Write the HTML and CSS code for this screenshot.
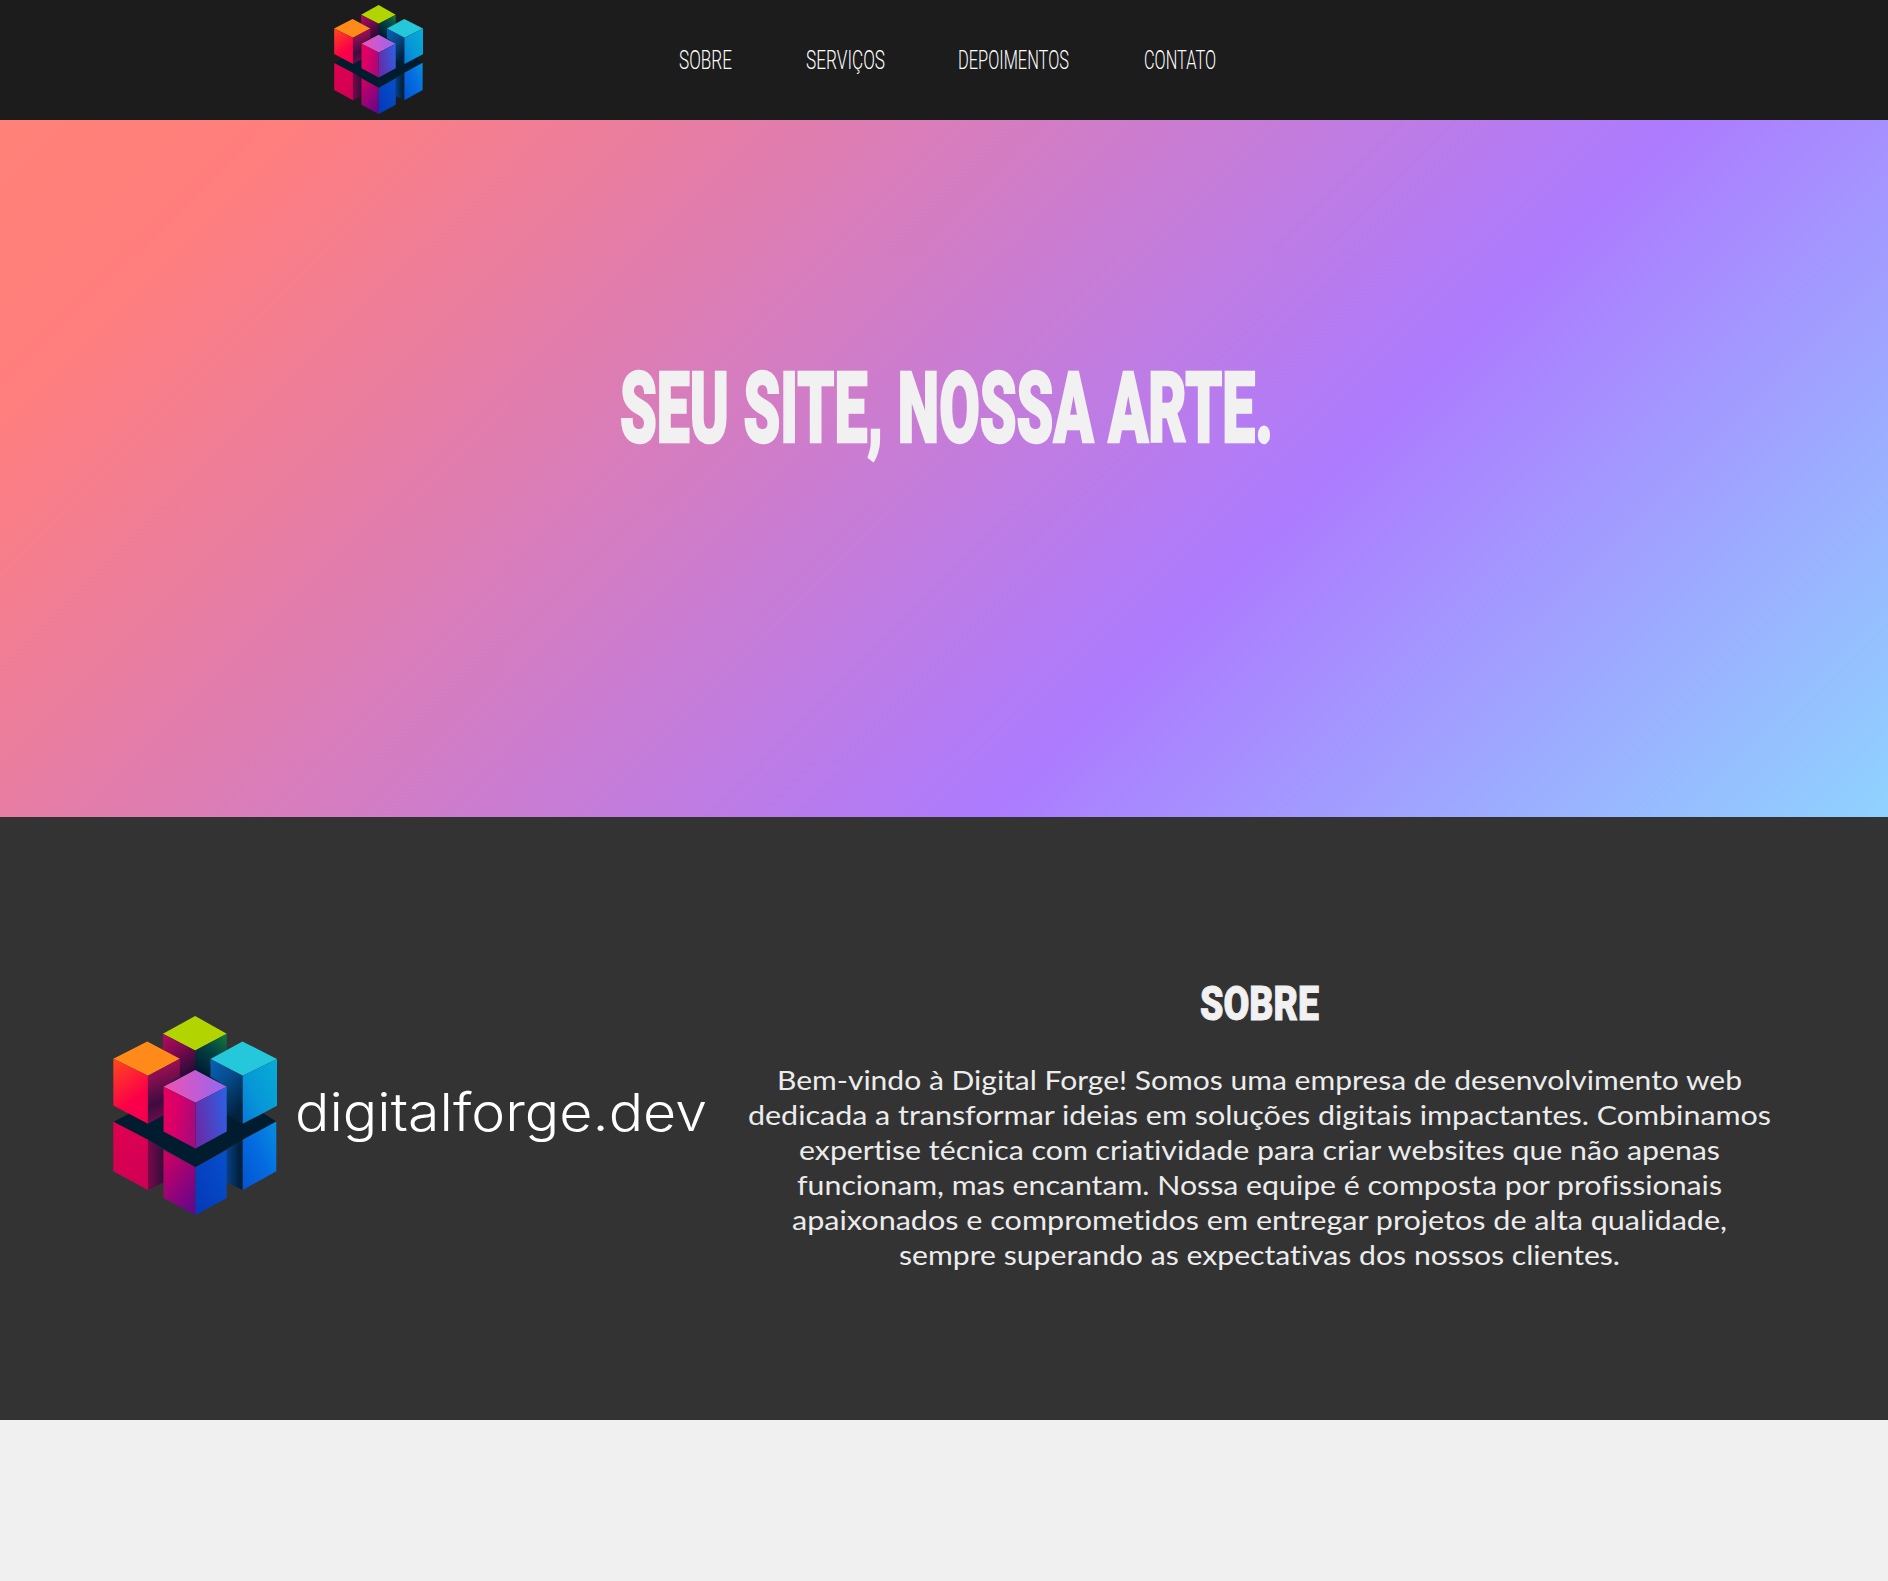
FILE: index.html
```html
<!DOCTYPE html>
<html lang="pt-BR">
<head>
<meta charset="utf-8">
<title>Digital Forge</title>
<link rel="stylesheet" href="styles.css">
</head>
<body>
<svg class="defs" aria-hidden="true">
  <defs>
    <linearGradient id="redL" x1="0" y1="0" x2="0.4" y2="1"><stop offset="0" stop-color="#ff4a1c"/><stop offset=".75" stop-color="#fb0048"/><stop offset="1" stop-color="#f5004f"/></linearGradient>
    <linearGradient id="redR" x1=".3" y1="0" x2=".5" y2="1"><stop offset="0" stop-color="#b80f5c"/><stop offset=".65" stop-color="#3d0c40"/><stop offset="1" stop-color="#7a0d50"/></linearGradient>
    <linearGradient id="backL" x1="0" y1="0" x2=".5" y2="1"><stop offset="0" stop-color="#b80a5a"/><stop offset=".5" stop-color="#7a0a50"/><stop offset="1" stop-color="#2a0a35"/></linearGradient>
    <linearGradient id="backR" x1="1" y1="0" x2=".4" y2="1"><stop offset="0" stop-color="#167a3c"/><stop offset=".5" stop-color="#034444"/><stop offset="1" stop-color="#001c33"/></linearGradient>
    <linearGradient id="cyanL" x1="0" y1="0" x2=".5" y2="1"><stop offset="0" stop-color="#0862b8"/><stop offset=".4" stop-color="#064f93"/><stop offset="1" stop-color="#02223f"/></linearGradient>
    <linearGradient id="cyanR" x1="1" y1="0" x2="0" y2="1"><stop offset="0" stop-color="#06aed6"/><stop offset=".6" stop-color="#0796d8"/><stop offset="1" stop-color="#0878d8"/></linearGradient>
    <linearGradient id="midT"><stop offset="0" stop-color="#f052ae"/><stop offset=".5" stop-color="#c45bd2"/><stop offset="1" stop-color="#8f6af0"/></linearGradient>
    <linearGradient id="midL" x1="0" y1="0" x2="1" y2=".3"><stop offset="0" stop-color="#e8005c"/><stop offset=".5" stop-color="#d8006a"/><stop offset="1" stop-color="#ad0878"/></linearGradient>
    <linearGradient id="midR" x1="0" y1=".6" x2="1" y2=".3"><stop offset="0" stop-color="#6a2aa8"/><stop offset="1" stop-color="#2f5ee2"/></linearGradient>
    <linearGradient id="lowL" x1="0" y1="0" x2=".3" y2="1"><stop offset="0" stop-color="#e2004f"/><stop offset="1" stop-color="#d00055"/></linearGradient>
    <linearGradient id="lowLs"><stop offset="0" stop-color="#78084b"/><stop offset="1" stop-color="#350d3c"/></linearGradient>
    <linearGradient id="lowM" x1="0" y1="0" x2=".7" y2="1"><stop offset="0" stop-color="#d6005f"/><stop offset="1" stop-color="#68068a"/></linearGradient>
    <linearGradient id="lowMr" x1="0" y1="1" x2="1" y2="0"><stop offset="0" stop-color="#0438b8"/><stop offset="1" stop-color="#0650cc"/></linearGradient>
    <linearGradient id="lowRs"><stop offset="0" stop-color="#064087"/><stop offset=".8" stop-color="#02203c"/></linearGradient>
    <linearGradient id="lowR" x1="0" y1="1" x2="1" y2="0"><stop offset="0" stop-color="#0453d0"/><stop offset=".5" stop-color="#046be0"/><stop offset="1" stop-color="#058fe0"/></linearGradient>
    <symbol id="cubes" viewBox="38 34 493 596" preserveAspectRatio="none">
      <path fill="#001c2e" d="M40 351 80 330 190 270 240 180 330 180 380 270 491 326 529 350 428 405 286 487 143 405Z"/>
      <path fill="#b2d400" d="M285 34 380 87 285 137 188 87Z"/>
      <path fill="url(#backL)" d="M188 87 285 137V200L238 225V163L188 136Z"/>
      <path fill="url(#backR)" d="M380 87 285 137V197L330 215V163L380 136Z"/>
      <path fill="#ff8a1a" d="M141 110 239 162 143 213 39 162Z"/>
      <path fill="url(#redL)" d="M39 162 143 213V357L39 302Z"/>
      <path fill="url(#redR)" d="M239 162 143 213V357L190 331V246L239 216Z"/>
      <path fill="#24c8da" d="M427 110 531 163 428 213 331 163Z"/>
      <path fill="url(#cyanL)" d="M331 163 428 213V357L380 330V246L331 216Z"/>
      <path fill="url(#cyanR)" d="M531 163 428 213V357L531 303Z"/>
      <path fill="url(#midT)" d="M285 196 380 246 286 294 190 246Z"/>
      <path fill="url(#midL)" d="M190 246 286 294V431L190 380Z"/>
      <path fill="url(#midR)" d="M380 246 286 294V431L380 380Z"/>
      <path fill="url(#lowL)" d="M39 351 143 405V555L39 499Z"/>
      <path fill="url(#lowLs)" d="M143 405 190 433V533L143 555Z"/>
      <path fill="url(#lowRs)" d="M380 433 428 405V555L380 533Z"/>
      <path fill="url(#lowR)" d="M428 405 529 350V499L428 555Z"/>
      <path fill="url(#lowM)" d="M190 435 286 487V630L190 579Z"/>
      <path fill="url(#lowMr)" d="M380 435 286 487V630L380 579Z"/>
    </symbol>
  </defs>
</svg>

<header class="header">
  <svg class="header-logo"><use href="#cubes"/></svg>
  <nav class="nav">
    <a class="link"><svg width="51" height="36"><text x="-1" y="23" textLength="53" lengthAdjust="spacingAndGlyphs">SOBRE</text></svg></a>
    <a class="link"><svg width="77" height="36"><text x="-1" y="23" textLength="79" lengthAdjust="spacingAndGlyphs">SERVIÇOS</text></svg></a>
    <a class="link"><svg width="110" height="36"><text x="-1" y="23" textLength="111" lengthAdjust="spacingAndGlyphs">DEPOIMENTOS</text></svg></a>
    <a class="link"><svg width="71" height="36"><text x="-1" y="23" textLength="72" lengthAdjust="spacingAndGlyphs">CONTATO</text></svg></a>
  </nav>
</header>

<section class="hero">
  <h1 class="hero-title">
    <svg width="652" height="110">
      <text x="0" y="84" textLength="653" lengthAdjust="spacingAndGlyphs">SEU SITE, NOSSA ARTE.</text>
    </svg>
  </h1>
</section>

<section class="about">
  <div class="brand">
    <svg class="brand-logo"><use href="#cubes"/></svg>
    <svg class="brand-name" width="412" height="70"><text x="-2" y="46" textLength="412" lengthAdjust="spacingAndGlyphs">digitalforge.dev</text></svg>
  </div>
  <div class="about-text">
    <h2 class="about-title"><svg width="118" height="50"><text x="-1" y="43" textLength="119" lengthAdjust="spacingAndGlyphs">SOBRE</text></svg></h2>
    <p class="about-copy">
      <svg width="1024" height="210">
        <text x="29" y="27" textLength="965" lengthAdjust="spacingAndGlyphs">Bem-vindo à Digital Forge! Somos uma empresa de desenvolvimento web</text>
        <text x="0" y="62" textLength="1023" lengthAdjust="spacingAndGlyphs">dedicada a transformar ideias em soluções digitais impactantes. Combinamos</text>
        <text x="51" y="97" textLength="921" lengthAdjust="spacingAndGlyphs">expertise técnica com criatividade para criar websites que não apenas</text>
        <text x="49" y="132" textLength="925" lengthAdjust="spacingAndGlyphs">funcionam, mas encantam. Nossa equipe é composta por profissionais</text>
        <text x="44" y="167" textLength="935" lengthAdjust="spacingAndGlyphs">apaixonados e comprometidos em entregar projetos de alta qualidade,</text>
        <text x="151" y="202" textLength="721" lengthAdjust="spacingAndGlyphs">sempre superando as expectativas dos nossos clientes.</text>
      </svg>
    </p>
  </div>
</section>
</body>
</html>
```
FILE: styles.css
```css
* { box-sizing: border-box; margin: 0; padding: 0; }
body { background: #f0f0f0; color: #f1f1f1; font-family: Lato, sans-serif; overflow-x: hidden; }
svg { display: block; overflow: visible; }
svg text { fill: currentColor; }
.defs { position: absolute; width: 0; height: 0; }

.header { display: flex; align-items: flex-start; height: 120px; padding: 5px 0 0 334px; background: #1c1c1c; }
.header-logo { width: 89px; height: 109px; margin-right: 257px; }
.nav { display: flex; gap: 75.5px; padding-top: 41px; }
.link { font: 300 25.3px Roboto, sans-serif; color: #fff; }

.hero { display: flex; justify-content: center; height: 697px; padding: 238px 0 0 4px; background: linear-gradient(135deg, #ff8177 0%, #ff7e7e 11.5%, #ad7bff 65%, #8fd3ff 100%); }
.hero-title { font: 900 98px Roboto, sans-serif; color: #f1f1f1; }
.hero-title text { stroke: currentColor; stroke-width: 2.5px; }

.about { display: flex; height: 603px; padding-left: 113px; background: #333; }
.brand { display: flex; width: 635px; padding-top: 199px; }
.brand-logo { width: 164px; height: 199px; margin-right: 20px; }
.brand-name { margin-top: 69px; font: 300 52px Inter, sans-serif; color: #fff; }
.about-text { display: flex; flex-direction: column; align-items: center; width: 1024px; padding-top: 160px; }
.about-title { font: 900 49px Roboto, sans-serif; }
.about-title text { stroke: currentColor; stroke-width: 1px; }
.about-copy { margin-top: 36px; font: 400 27.5px Lato, sans-serif; font-variant-ligatures: none; color: #ececec; }
```
